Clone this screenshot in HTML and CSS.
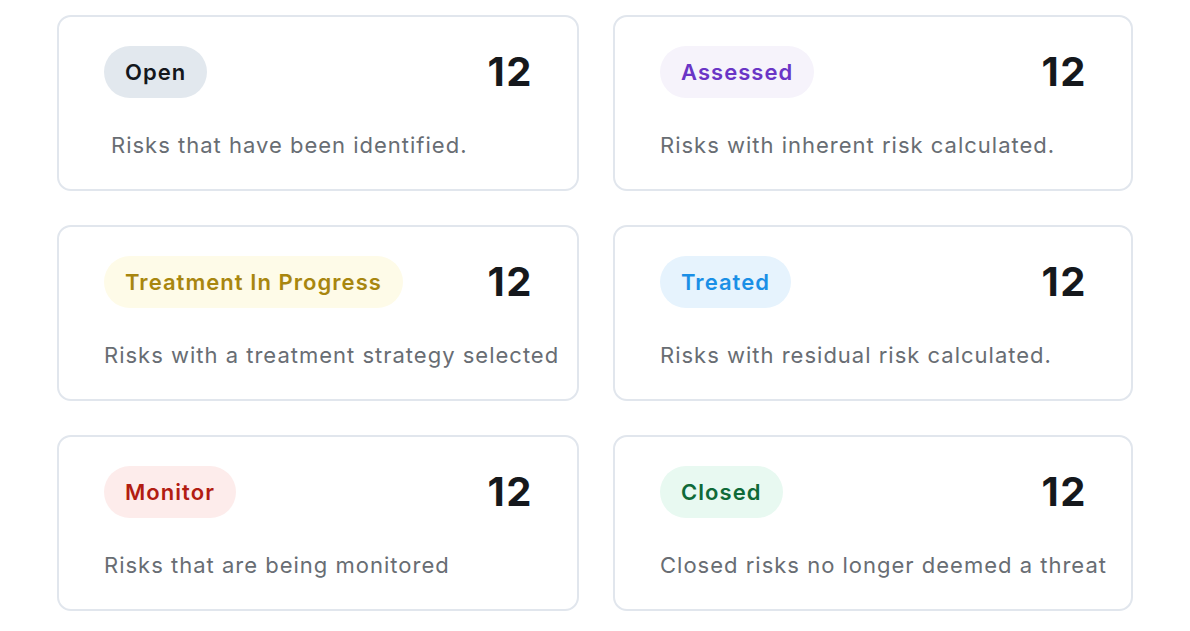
FILE: index.html
```html
<!DOCTYPE html>
<html lang="en">
<head>
<meta charset="utf-8">
<title>Risk statuses</title>
<link rel="stylesheet" href="styles.css">
</head>
<body>
<main class="grid">
  <section class="card">
    <div class="card-head">
      <span class="badge badge-open">Open</span>
      <span class="count">12</span>
    </div>
    <p class="desc desc-indent">Risks that have been identified.</p>
  </section>
  <section class="card">
    <div class="card-head">
      <span class="badge badge-assessed">Assessed</span>
      <span class="count">12</span>
    </div>
    <p class="desc">Risks with inherent risk calculated.</p>
  </section>
  <section class="card">
    <div class="card-head">
      <span class="badge badge-progress">Treatment In Progress</span>
      <span class="count">12</span>
    </div>
    <p class="desc">Risks with a treatment strategy selected</p>
  </section>
  <section class="card">
    <div class="card-head">
      <span class="badge badge-treated">Treated</span>
      <span class="count">12</span>
    </div>
    <p class="desc">Risks with residual risk calculated.</p>
  </section>
  <section class="card">
    <div class="card-head">
      <span class="badge badge-monitor">Monitor</span>
      <span class="count">12</span>
    </div>
    <p class="desc">Risks that are being monitored</p>
  </section>
  <section class="card">
    <div class="card-head">
      <span class="badge badge-closed">Closed</span>
      <span class="count">12</span>
    </div>
    <p class="desc">Closed risks no longer deemed a threat</p>
  </section>
</main>
</body>
</html>
```
FILE: styles.css
```css
* { box-sizing: border-box; }
html, body { margin: 0; padding: 0; background: #ffffff; }
body {
  font-family: Inter, "Noto Sans", "Liberation Sans", sans-serif;
  color: #111418;
}
.grid {
  display: grid;
  grid-template-columns: 522px 520px;
  grid-auto-rows: 176px;
  column-gap: 34px;
  row-gap: 34px;
  padding: 15px 0 0 57px;
}
.card {
  border: 2px solid #e1e6ed;
  border-radius: 14px;
  padding: 29px 47px 0 45px;
  display: flex;
  flex-direction: column;
}
.card-head {
  display: flex;
  align-items: center;
  justify-content: space-between;
  height: 52px;
}
.badge {
  display: inline-flex;
  align-items: center;
  height: 52px;
  padding: 0 21px;
  border-radius: 26px;
  font-size: 22px;
  font-weight: 600;
  letter-spacing: 1.05px;
}
.badge-open { background: #e2e8ee; color: #14171c; }
.badge-assessed { background: #f6f3fb; color: #6a35c6; }
.badge-progress { background: #fefbe8; color: #a8860f; }
.badge-treated { background: #e6f3fd; color: #1a8fe6; }
.badge-monitor { background: #fdeceb; color: #b21d12; }
.badge-closed { background: #e8f9f1; color: #0f6a38; }
.count {
  font-size: 40px;
  font-weight: 700;
  color: #15181c;
  line-height: 1;
  letter-spacing: 1.5px;
  margin-right: -3px;
}
.desc {
  margin: 31px 0 0;
  font-size: 22px;
  line-height: 32px;
  color: #686d73;
  letter-spacing: 1px;
  white-space: nowrap;
}
.desc-indent { padding-left: 7px; }
```
